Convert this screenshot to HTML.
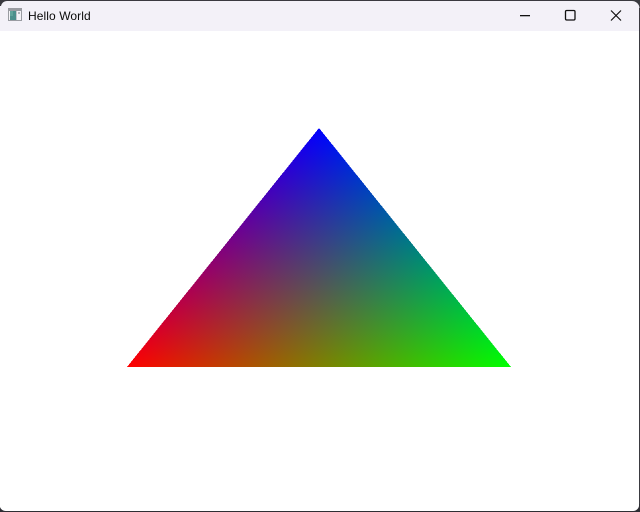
<!DOCTYPE html>
<html>
<head>
<meta charset="utf-8">
<style>
html,body{margin:0;padding:0;width:640px;height:512px;overflow:hidden;background:#fff}
body{position:relative;font-family:"Liberation Sans",sans-serif}
#bar{position:absolute;left:0;top:0;width:640px;height:31px;background:#f3f1f8}
#title{position:absolute;left:28px;top:9px;font-size:12px;line-height:15px;color:#0a0a0a;letter-spacing:.09px}
svg{position:absolute;left:0;top:0}
</style>
</head>
<body>
<div id="bar"></div>
<div id="title">Hello World</div>
<svg width="640" height="512" viewBox="0 0 640 512">
<defs>
<linearGradient id="r" gradientUnits="userSpaceOnUse" x1="127" y1="367" x2="360.38" y2="179.51"><stop offset="0" stop-color="#f00"/><stop offset="1" stop-color="#000"/></linearGradient>
<linearGradient id="g" gradientUnits="userSpaceOnUse" x1="511" y1="367" x2="277.62" y2="179.51"><stop offset="0" stop-color="#0f0"/><stop offset="1" stop-color="#000"/></linearGradient>
<linearGradient id="b" gradientUnits="userSpaceOnUse" x1="319" y1="128" x2="319" y2="367"><stop offset="0" stop-color="#00f"/><stop offset="1" stop-color="#000"/></linearGradient>
</defs>
<g style="isolation:isolate" shape-rendering="crispEdges">
<polygon points="319,128 511,367 127,367" fill="url(#r)"/>
<polygon points="319,128 511,367 127,367" fill="url(#g)" style="mix-blend-mode:plus-lighter"/>
<polygon points="319,128 511,367 127,367" fill="url(#b)" style="mix-blend-mode:plus-lighter"/>
</g>
<!-- app icon -->
<rect x="8" y="8" width="14" height="13" fill="#eceaf0"/>
<path d="M8 8H22V21H8ZM9 11V20H21V11Z" fill="#9a9ca2" fill-rule="evenodd"/>
<rect x="9" y="11" width="12" height="9" fill="#f4f3f7"/>
<rect x="10" y="11" width="6" height="9" fill="#4c8f8c"/>
<rect x="10" y="11" width="3" height="5" fill="#5fa39a"/>
<rect x="16" y="11" width="1" height="9" fill="#c4c6cc"/>
<rect x="18" y="12" width="2" height="2" fill="#b0b3ba"/>
<!-- caption buttons -->
<rect x="520" y="15" width="10" height="1.3" fill="#111"/>
<rect x="565.5" y="10.5" width="9.5" height="9.5" rx="1.2" fill="none" stroke="#111" stroke-width="1.3"/>
<path d="M611 10.5L621 20.5M621 10.5L611 20.5" stroke="#111" stroke-width="1.2" fill="none"/>
<!-- window frame: corners outside the rounded edge are dark -->
<path d="M0 0H640V8H639.5A7.5 7.5 0 0 0 632 1H7A6 6 0 0 0 1 6H0Z" fill="#3a3a40"/>
<rect x="639" y="8" width="1" height="498" fill="#3a3a40"/>
<path d="M0 512H640V504H639A6 6 0 0 1 633 511H6A6 6 0 0 1 0 507Z" fill="#2e2e34"/>
</svg>
</body>
</html>
